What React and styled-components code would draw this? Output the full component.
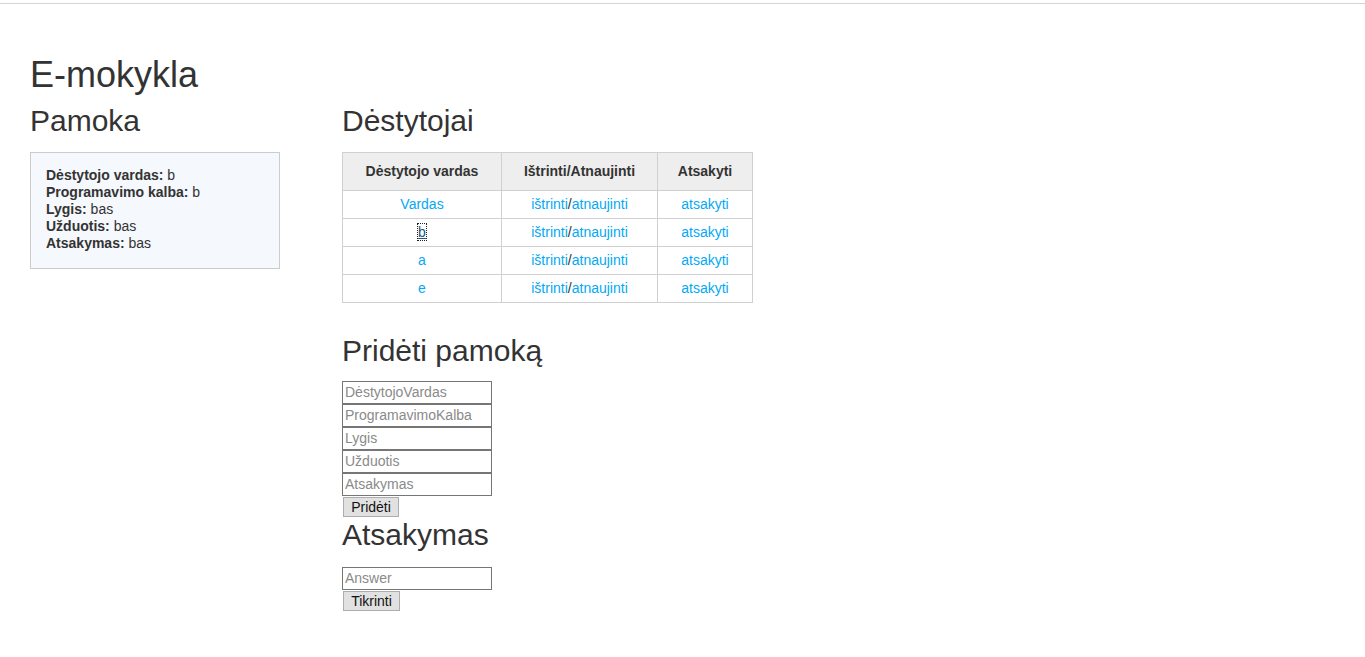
import React from 'react';
import styled, { createGlobalStyle, css } from 'styled-components';

const GlobalStyle = createGlobalStyle`
  html, body {
    margin: 0;
    padding: 0;
    background: #fff;
  }
  body {
    font-family: "Liberation Sans", Arial, sans-serif;
    font-size: 14px;
    color: #333;
  }
  * {
    box-sizing: border-box;
  }
`;

const TopLine = styled.div`
  height: 4px;
  border-bottom: 1px solid #d4d4d4;
`;

const Page = styled.div`
  padding: 0 30px;
`;

const Title = styled.h1`
  margin: 51px 0 10px;
  font-size: 36px;
  font-weight: 500;
  line-height: 1.1;
`;

const Heading = styled.h2`
  margin: 0 0 14px;
  font-size: 30px;
  font-weight: 500;
  line-height: 33px;
  ${(p) => p.$top !== undefined && css`margin-top: ${p.$top}px;`}
  ${(p) => p.$bottom !== undefined && css`margin-bottom: ${p.$bottom}px;`}
`;

const Columns = styled.div`
  display: grid;
  grid-template-columns: 250px auto;
  column-gap: 62px;
  align-items: start;
`;

const Side = styled.div`
  display: flex;
  flex-direction: column;
`;

const Main = styled.div`
  display: flex;
  flex-direction: column;
  align-items: flex-start;
`;

const InfoBox = styled.div`
  background: #f5f8fd;
  border: 1px solid #cccccc;
  padding: 14px 15px 15px;
  line-height: 17.2px;
`;

const InfoLine = styled.div`
  b {
    font-weight: 700;
  }
`;

const Table = styled.table`
  border-collapse: collapse;
  border: 1px solid #d0d0d0;
  table-layout: fixed;
  width: 410px;
`;

const HeadCell = styled.th`
  background: #eeeeee;
  border: 1px solid #d0d0d0;
  padding: 8px 8px 9px;
  line-height: 20px;
  font-weight: 700;
  text-align: center;
  width: ${(p) => p.$w}px;
`;

const Cell = styled.td`
  border: 1px solid #d0d0d0;
  padding: 3px 8px 4px;
  line-height: 20px;
  text-align: center;
`;

const Link = styled.a`
  color: #03a9f4;
  text-decoration: none;
  cursor: pointer;
  ${(p) =>
    p.$focused &&
    css`
      color: #23527c;
      text-decoration: underline;
      outline: 1px dotted #222;
      outline-offset: 0;
    `}
`;

const Form = styled.div`
  display: flex;
  flex-direction: column;
  align-items: flex-start;
`;

const Input = styled.input`
  display: block;
  width: 150px;
  height: 23px;
  margin: 0;
  padding: 1px 2px;
  border: 1px solid #767676;
  font-family: "Liberation Sans", Arial, sans-serif;
  font-size: 14px;
  color: #333;
  background: #fff;
  &::placeholder {
    color: #8a8a8a;
  }
`;

const Button = styled.button`
  margin: 1px 0 0 1px;
  height: 20px;
  width: ${(p) => p.$w}px;
  padding: 0 6px;
  border: 1px solid #adadad;
  background: #e1e1e1;
  font-family: "Liberation Sans", Arial, sans-serif;
  font-size: 14px;
  color: #111;
  line-height: 16px;
`;

const rows = ['Vardas', 'b', 'a', 'e'];

export default function App() {
  return (
    <>
      <GlobalStyle />
      <TopLine />
      <Page>
        <Title>E-mokykla</Title>
        <Columns>
          <Side>
            <Heading $top={-1} $bottom={15}>Pamoka</Heading>
            <InfoBox>
              <InfoLine><b>Dėstytojo vardas:</b> b</InfoLine>
              <InfoLine><b>Programavimo kalba:</b> b</InfoLine>
              <InfoLine><b>Lygis:</b> bas</InfoLine>
              <InfoLine><b>Užduotis:</b> bas</InfoLine>
              <InfoLine><b>Atsakymas:</b> bas</InfoLine>
            </InfoBox>
          </Side>
          <Main>
            <Heading $top={-1} $bottom={15}>Dėstytojai</Heading>
            <Table>
              <thead>
                <tr>
                  <HeadCell $w={159}>Dėstytojo vardas</HeadCell>
                  <HeadCell $w={156}>Ištrinti/Atnaujinti</HeadCell>
                  <HeadCell $w={95}>Atsakyti</HeadCell>
                </tr>
              </thead>
              <tbody>
                {rows.map((r) => (
                  <tr key={r}>
                    <Cell>
                      <Link $focused={r === 'b'}>{r}</Link>
                    </Cell>
                    <Cell>
                      <Link>ištrinti</Link>/<Link>atnaujinti</Link>
                    </Cell>
                    <Cell>
                      <Link>atsakyti</Link>
                    </Cell>
                  </tr>
                ))}
              </tbody>
            </Table>
            <Heading $top={31} $bottom={14}>Pridėti pamoką</Heading>
            <Form>
              <Input placeholder="DėstytojoVardas" />
              <Input placeholder="ProgramavimoKalba" />
              <Input placeholder="Lygis" />
              <Input placeholder="Užduotis" />
              <Input placeholder="Atsakymas" />
              <Button $w={56}>Pridėti</Button>
            </Form>
            <Heading $top={1} $bottom={16}>Atsakymas</Heading>
            <Form>
              <Input placeholder="Answer" />
              <Button $w={57}>Tikrinti</Button>
            </Form>
          </Main>
        </Columns>
      </Page>
    </>
  );
}
